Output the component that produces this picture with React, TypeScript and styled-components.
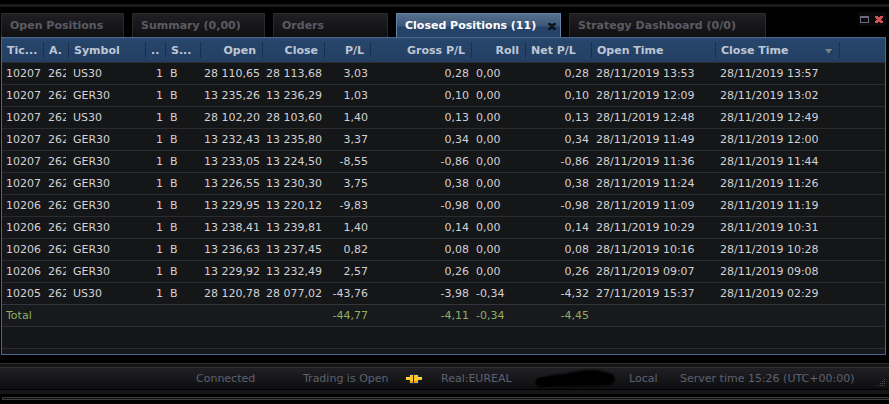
import React from "react";
import styled, { createGlobalStyle, css } from "styled-components";

const GlobalStyle = createGlobalStyle`
  * { box-sizing: border-box; }
  body {
    margin: 0;
    background: #000;
    font: 11px/14px "DejaVu Sans", Verdana, sans-serif;
    color: #d2d2d4;
  }
  button { font: inherit; color: inherit; border: 0; padding: 0; background: none; cursor: pointer; }
`;

const Window = styled.main`
  display: flex;
  flex-direction: column;
  min-height: 100vh;
  padding-top: 4px;
  background: #000;
  overflow: hidden;
`;

const TopEdge = styled.div`
  height: 3px;
  background: #1a1a1f;
`;

const TabBar = styled.header`
  display: flex;
  align-items: flex-end;
  gap: 8px;
  padding: 6px 3px 0 1px;
`;

const Tab = styled.div<{ $width: number; $active?: boolean }>`
  display: flex;
  align-items: center;
  flex: 0 0 ${(p) => p.$width}px;
  height: 24px;
  padding: 0 4px 0 8px;
  border: 1px solid #2a2a2f;
  border-bottom: 0;
  background: linear-gradient(#1f1f24, #101013);
  color: #5b5b61;
  font-weight: bold;
  white-space: nowrap;
  ${(p) =>
    p.$active &&
    css`
      height: 25px;
      margin-bottom: -1px;
      border-color: #6583a5;
      background: linear-gradient(#56708f 0, #3c5679 12px, #25436a 13px, #264266 100%);
      color: #fff;
    `}
`;

const TabButton = styled.button`
  flex: 1;
  height: 100%;
  text-align: left;
`;

const IconButton = styled.button`
  display: flex;
  align-items: center;
  justify-content: center;
`;

const WindowControls = styled.div`
  display: flex;
  align-items: center;
  gap: 6px;
  align-self: flex-start;
  height: 14px;
  margin: -1px 0 0 auto;
  padding: 0 3px 0 2px;
  background: #09090b;
`;

const Panel = styled.section`
  margin: 0 3px 0 1px;
  border: 1px solid #4a6892;
  background: #16171a;
  padding-bottom: 5px;
`;

const Grid = styled.table`
  width: 100%;
  table-layout: fixed;
  border-collapse: separate;
  border-spacing: 0;
`;

type Align = "left" | "right";

const HeadCell = styled.th`
  height: 24px;
  padding: 0;
  background: linear-gradient(#2b4b72, #26456b 3px, #243f62);
  color: #bec7d5;
`;

const HeadInner = styled.div<{ $align: Align; $divider: boolean }>`
  display: flex;
  align-items: center;
  justify-content: ${(p) => (p.$align === "right" ? "flex-end" : "space-between")};
  height: 16px;
  padding: 2px 6px 0 5px;
  white-space: nowrap;
  ${(p) =>
    p.$divider &&
    css`
      border-right: 1px solid #182f4e;
      box-shadow: 1px 0 #3c5c85;
    `}
`;

const Cell = styled.td<{ $align?: Align; $total?: boolean }>`
  height: 22px;
  padding: 0 3px 0 ${(p) => (p.$align === "right" ? 3 : 4)}px;
  border-top: 1px solid #2b2b30;
  background: #151618;
  ${(p) =>
    p.$total &&
    css`
      border-top-color: #35353a;
      background: #18191c;
      color: #8fae62;
    `}
`;

const Value = styled.div<{ $align: Align }>`
  display: flex;
  justify-content: ${(p) => (p.$align === "right" ? "flex-end" : "flex-start")};
  overflow: hidden;
  white-space: nowrap;
`;

const BottomLine = styled.div`
  height: 1px;
  background: #2b2b30;
`;

const StatusFrame = styled.footer`
  margin-top: 8px;
  border-top: 1px solid #2a2a2c;
  background: #151517;
  padding: 3px 0 4px;
`;

const StatusBar = styled.div`
  display: flex;
  align-items: center;
  justify-content: flex-end;
  height: 23px;
  padding-right: 3px;
  border-top: 1px solid #303035;
  border-bottom: 1px solid #000;
  background: linear-gradient(#202024, #0e0e10);
  color: #5d6170;
  white-space: nowrap;
`;

const StatusItem = styled.span<{ $width: number }>`
  display: flex;
  align-items: center;
  flex: 0 0 ${(p) => p.$width}px;
`;

const GripSlot = styled.span`
  display: flex;
  align-self: flex-end;
  padding-bottom: 2px;
`;

const WindowEdge = styled.div`
  height: 3px;
  margin: 3px 0 4px 2px;
  border: solid #3c3c3e;
  border-width: 1px 0 1px 1px;
  background: #111;
`;

const columns: { label: string; align: Align; head: Align; width?: number }[] = [
  { label: "Tic...", align: "left", head: "left", width: 42 },
  { label: "A.", align: "left", head: "left", width: 25 },
  { label: "Symbol", align: "left", head: "left", width: 77 },
  { label: "..", align: "right", head: "left", width: 20 },
  { label: "S...", align: "left", head: "left", width: 35 },
  { label: "Open", align: "right", head: "right", width: 62 },
  { label: "Close", align: "right", head: "right", width: 62 },
  { label: "P/L", align: "right", head: "right", width: 46 },
  { label: "Gross P/L", align: "right", head: "right", width: 101 },
  { label: "Roll", align: "left", head: "right", width: 54 },
  { label: "Net P/L", align: "right", head: "left", width: 66 },
  { label: "Open Time", align: "left", head: "left", width: 124 },
  { label: "Close Time", align: "left", head: "left", width: 124 },
  { label: "", align: "left", head: "left" },
];

const rows = [
  ["10207", "262", "US30", "1", "B", "28 110,65", "28 113,68", "3,03", "0,28", "0,00", "0,28", "28/11/2019 13:53", "28/11/2019 13:57"],
  ["10207", "262", "GER30", "1", "B", "13 235,26", "13 236,29", "1,03", "0,10", "0,00", "0,10", "28/11/2019 12:09", "28/11/2019 13:02"],
  ["10207", "262", "US30", "1", "B", "28 102,20", "28 103,60", "1,40", "0,13", "0,00", "0,13", "28/11/2019 12:48", "28/11/2019 12:49"],
  ["10207", "262", "GER30", "1", "B", "13 232,43", "13 235,80", "3,37", "0,34", "0,00", "0,34", "28/11/2019 11:49", "28/11/2019 12:00"],
  ["10207", "262", "GER30", "1", "B", "13 233,05", "13 224,50", "-8,55", "-0,86", "0,00", "-0,86", "28/11/2019 11:36", "28/11/2019 11:44"],
  ["10207", "262", "GER30", "1", "B", "13 226,55", "13 230,30", "3,75", "0,38", "0,00", "0,38", "28/11/2019 11:24", "28/11/2019 11:26"],
  ["10206", "262", "GER30", "1", "B", "13 229,95", "13 220,12", "-9,83", "-0,98", "0,00", "-0,98", "28/11/2019 11:09", "28/11/2019 11:19"],
  ["10206", "262", "GER30", "1", "B", "13 238,41", "13 239,81", "1,40", "0,14", "0,00", "0,14", "28/11/2019 10:29", "28/11/2019 10:31"],
  ["10206", "262", "GER30", "1", "B", "13 236,63", "13 237,45", "0,82", "0,08", "0,00", "0,08", "28/11/2019 10:16", "28/11/2019 10:28"],
  ["10206", "262", "GER30", "1", "B", "13 229,92", "13 232,49", "2,57", "0,26", "0,00", "0,26", "28/11/2019 09:07", "28/11/2019 09:08"],
  ["10205", "262", "US30", "1", "B", "28 120,78", "28 077,02", "-43,76", "-3,98", "-0,34", "-4,32", "27/11/2019 15:37", "28/11/2019 02:29"],
];

const total = ["Total", "", "", "", "", "", "", "-44,77", "-4,11", "-0,34", "-4,45", "", ""];

const tabs = [
  { label: "Open Positions", width: 123 },
  { label: "Summary (0,00)", width: 133 },
  { label: "Orders", width: 115 },
  { label: "Closed Positions (11)", width: 165, active: true },
  { label: "Strategy Dashboard (0/0)", width: 197 },
];

const CrossIcon = ({ color }: { color: string }) => (
  <svg width="8" height="7" viewBox="0 0 8 7" fill={color} shapeRendering="crispEdges" aria-hidden="true">
    <path d="M0 0h3v1h2V0h3v2H7v1H6v1h1v1h1v2H5V6H3v1H0V5h1V4h1V3H1V2H0z" />
  </svg>
);

const MaximizeIcon = () => (
  <svg width="9" height="7" viewBox="0 0 9 7" fill="#6d6a80" shapeRendering="crispEdges" aria-hidden="true">
    <path fillRule="evenodd" d="M0 0h9v7H0zM1 2v4h7V2z" />
  </svg>
);

const SortIcon = () => (
  <svg width="8" height="5" viewBox="0 0 8 5" aria-hidden="true">
    <path d="M0 0h8L4 5z" fill="#7d828f" />
    <path d="M8 0L4 5" stroke="#1c2c42" />
  </svg>
);

const PlugIcon = () => (
  <svg width="16" height="10" viewBox="0 0 16 10" shapeRendering="crispEdges" aria-hidden="true">
    <path d="M3 1h1V0h8v1h1v8h-1v1H4V9H3z" fill="#0c3157" />
    <path d="M0 3h4V1h3v8H4V6H0zM8 1h4v2h4v3h-4v3H8z" fill="#ffc72c" />
    <path d="M0 3h4v1H0zM12 3h4v1h-4z" fill="#ffe979" />
    <path d="M4 7h3v2H4zM8 7h4v2H8z" fill="#f39a16" />
  </svg>
);

const Redaction = () => (
  <svg width="82" height="20" viewBox="0 0 82 20" overflow="visible" aria-hidden="true">
    <defs>
      <filter id="soften" x="-10%" y="-30%" width="120%" height="160%">
        <feGaussianBlur stdDeviation="1" />
      </filter>
    </defs>
    <path
      d="M9 11C9 8 20 5 30 5C40 3 50 0 60 1C68 1 70 3 75 4C82 4 83 14 76 16C60 18 30 17 8 18C0 18 -1 11 5 9z"
      filter="url(#soften)"
    />
    <path d="M8 13L34 11L60 9L74 10" fill="none" stroke="#000" strokeWidth="10" strokeLinecap="round" />
  </svg>
);

const gripDots = [0, 1, 2, 3].flatMap((r) =>
  Array.from({ length: r + 1 }, (_, i) => ({ x: 6 - i * 2, y: r * 2 }))
);

const ResizeGrip = () => (
  <svg width="8" height="8" viewBox="0 0 8 8" shapeRendering="crispEdges" aria-hidden="true">
    {gripDots.map((d) => (
      <rect key={`${d.x}-${d.y}`} x={d.x} y={d.y} width="1" height="1" fill="#4a4a50" />
    ))}
  </svg>
);

export default function App() {
  return (
    <>
      <GlobalStyle />
      <Window>
        <TopEdge />
        <TabBar>
          {tabs.map((t) => (
            <Tab key={t.label} $width={t.width} $active={t.active}>
              <TabButton>{t.label}</TabButton>
              {t.active && (
                <IconButton aria-label="Close tab">
                  <CrossIcon color="#101820" />
                </IconButton>
              )}
            </Tab>
          ))}
          <WindowControls>
            <IconButton aria-label="Maximize">
              <MaximizeIcon />
            </IconButton>
            <IconButton aria-label="Close panel">
              <CrossIcon color="#cf5252" />
            </IconButton>
          </WindowControls>
        </TabBar>
        <Panel>
          <Grid>
            <colgroup>
              {columns.map((c) => (
                <col key={c.label} width={c.width} />
              ))}
            </colgroup>
            <thead>
              <tr>
                {columns.map((c) => (
                  <HeadCell key={c.label}>
                    <HeadInner $align={c.head} $divider={!!c.label}>
                      {c.label}
                      {c.label === "Close Time" && <SortIcon />}
                    </HeadInner>
                  </HeadCell>
                ))}
              </tr>
            </thead>
            <tbody>
              {rows.map((row, r) => (
                <tr key={r}>
                  {columns.map((c, i) => (
                    <Cell key={c.label} $align={c.align}>
                      <Value $align={c.align}>{row[i]}</Value>
                    </Cell>
                  ))}
                </tr>
              ))}
            </tbody>
            <tfoot>
              <tr>
                {columns.map((c, i) => (
                  <Cell key={c.label} $align={c.align} $total>
                    <Value $align={c.align}>{total[i]}</Value>
                  </Cell>
                ))}
              </tr>
              <tr>
                <Cell colSpan={columns.length} />
              </tr>
            </tfoot>
          </Grid>
          <BottomLine />
        </Panel>
        <StatusFrame>
          <StatusBar>
            <StatusItem $width={107}>Connected</StatusItem>
            <StatusItem $width={103}>Trading is Open</StatusItem>
            <StatusItem $width={35}>
              <PlugIcon />
            </StatusItem>
            <StatusItem $width={93}>Real:EUREAL</StatusItem>
            <StatusItem $width={95}>
              <Redaction />
            </StatusItem>
            <StatusItem $width={51}>Local</StatusItem>
            <StatusItem $width={198}>Server time 15:26 (UTC+00:00)</StatusItem>
            <GripSlot>
              <ResizeGrip />
            </GripSlot>
          </StatusBar>
        </StatusFrame>
        <WindowEdge />
      </Window>
    </>
  );
}
